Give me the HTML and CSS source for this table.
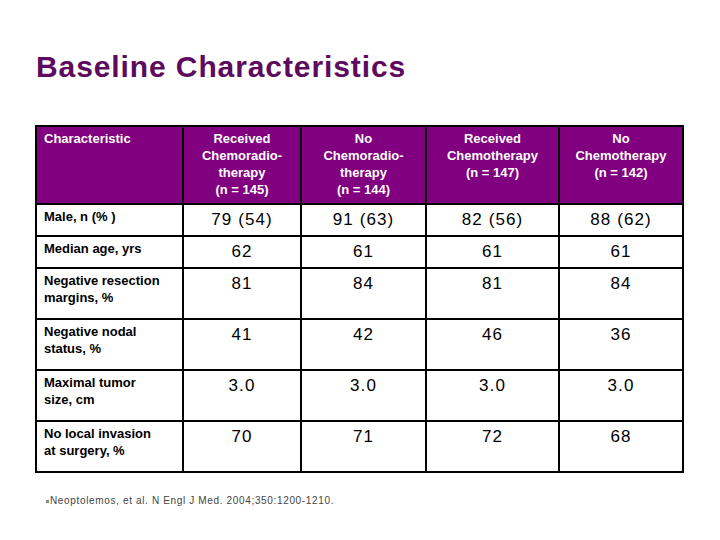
FILE: index.html
```html
<!DOCTYPE html>
<html>
<head>
<meta charset="utf-8">
<link rel="stylesheet" href="styles.css">
</head>
<body>
<div class="slide">
  <h1 class="title">Baseline Characteristics</h1>
  <table class="data">
    <colgroup>
      <col class="c1"><col class="c2"><col class="c3"><col class="c4"><col class="c5">
    </colgroup>
    <thead>
      <tr class="head">
        <th class="lbl">Characteristic</th>
        <th>Received<br>Chemoradio-<br>therapy<br>(n = 145)</th>
        <th>No<br>Chemoradio-<br>therapy<br>(n = 144)</th>
        <th>Received<br>Chemotherapy<br>(n = 147)</th>
        <th>No<br>Chemotherapy<br>(n = 142)</th>
      </tr>
    </thead>
    <tbody>
      <tr class="one"><td class="lbl">Male, n (% )</td><td>79 (54)</td><td>91 (63)</td><td>82 (56)</td><td>88 (62)</td></tr>
      <tr class="one"><td class="lbl">Median age, yrs</td><td>62</td><td>61</td><td>61</td><td>61</td></tr>
      <tr class="two"><td class="lbl">Negative resection<br>margins, %</td><td>81</td><td>84</td><td>81</td><td>84</td></tr>
      <tr class="two"><td class="lbl">Negative nodal<br>status, %</td><td>41</td><td>42</td><td>46</td><td>36</td></tr>
      <tr class="two"><td class="lbl">Maximal tumor<br>size, cm</td><td>3.0</td><td>3.0</td><td>3.0</td><td>3.0</td></tr>
      <tr class="two"><td class="lbl">No local invasion<br>at surgery, %</td><td>70</td><td>71</td><td>72</td><td>68</td></tr>
    </tbody>
  </table>
  <p class="note"><span class="bullet"></span>Neoptolemos, et al. N Engl J Med. 2004;350:1200-1210.</p>
</div>
</body>
</html>
```

FILE: styles.css
```css
html, body {
  margin: 0;
  padding: 0;
  background: #ffffff;
}
.slide {
  width: 720px;
  height: 540px;
  font-family: "Liberation Sans", Arial, sans-serif;
  overflow: hidden;
}
.title {
  margin: 49px 0 0 36px;
  font-size: 30px;
  line-height: 36px;
  font-weight: bold;
  letter-spacing: 0.9px;
  color: #5c0b5e;
}
.data {
  margin: 40px 0 0 35px;
  border-collapse: collapse;
  table-layout: fixed;
  width: 647px;
}
.c1 { width: 147px; }
.c2 { width: 118px; }
.c3 { width: 125px; }
.c4 { width: 133px; }
.c5 { width: 124px; }
.data th, .data td {
  border: 2px solid #000;
  padding: 0;
  vertical-align: top;
  text-align: center;
}
.data th {
  background: #800080;
  color: #ffffff;
  font-size: 13px;
  line-height: 17px;
  font-weight: bold;
  padding-top: 3px;
}
.head th { height: 73px; }
.data td {
  font-size: 17px;
  line-height: 22px;
  letter-spacing: 1.1px;
  color: #000;
  padding-top: 4px;
}
.data .lbl {
  text-align: left;
  padding-left: 7px;
  padding-right: 4px;
  font-size: 13px;
  line-height: 17px;
  font-weight: bold;
  letter-spacing: 0;
  white-space: nowrap;
}
.data td.lbl { padding-top: 3px; }
.one td { height: 26px; }
.two td { height: 45px; }
.note {
  margin: 22px 0 0 46px;
  font-size: 10px;
  line-height: 12px;
  color: #444;
  letter-spacing: 0.65px;
  display: flex;
  align-items: center;
}
.bullet {
  display: inline-block;
  width: 3px;
  height: 3px;
  background: #888;
  margin-right: 1px;
}
```
